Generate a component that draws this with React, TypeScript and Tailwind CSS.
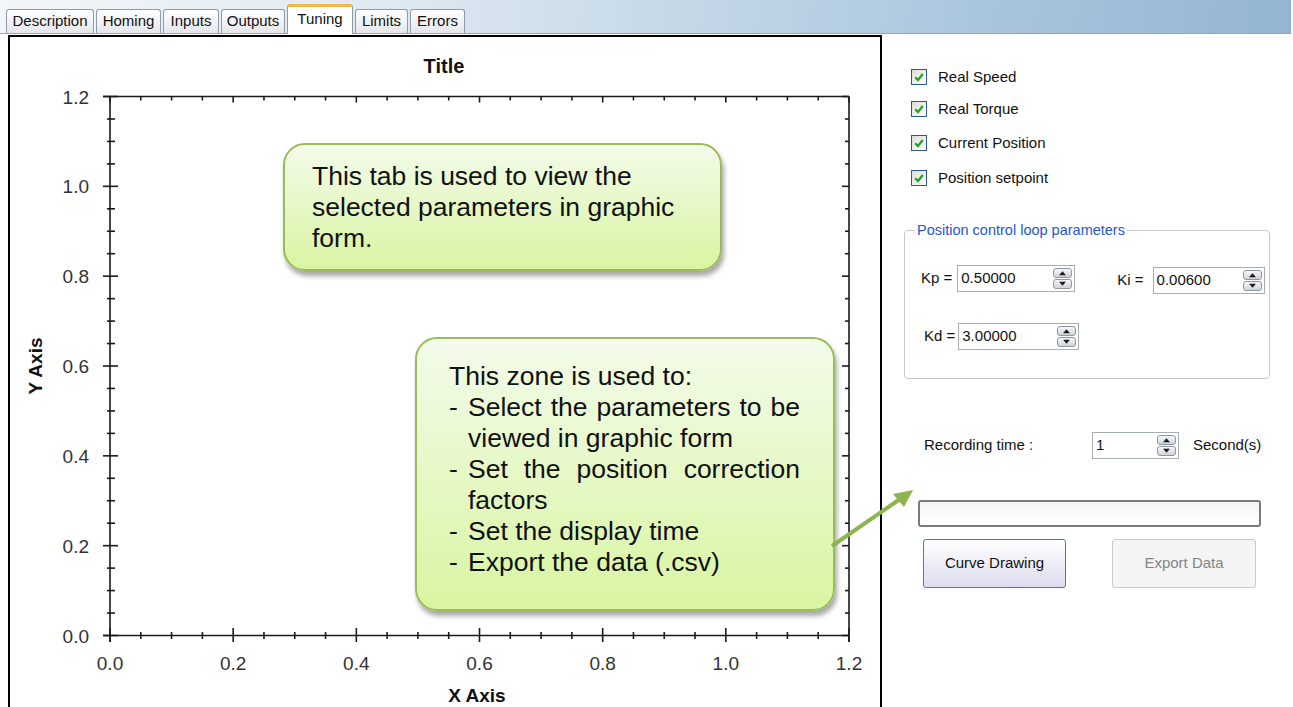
import type { ReactNode } from 'react'

const tabs = [
    { label: 'Description', w: 'w-[88px]' },
    { label: 'Homing', w: 'w-[65px]' },
    { label: 'Inputs', w: 'w-[56px]' },
    { label: 'Outputs', w: 'w-[64px]' },
    { label: 'Tuning', w: 'w-[66px]', active: true },
    { label: 'Limits', w: 'w-[53px]' },
    { label: 'Errors', w: 'w-[55px]' },
]

// plot area in page coordinates
const X0 = 110
const X1 = 849
const YB = 635.5
const YT = 96.5
const sx = (v: number) => X0 + (v / 1.2) * (X1 - X0)
const sy = (v: number) => YB - (v / 1.2) * (YB - YT)
const steps = Array.from({ length: 25 }, (_, i) => i * 0.05)
const labels = [0, 0.2, 0.4, 0.6, 0.8, 1.0, 1.2]

const Chart = () => (
    <svg width={870} height={670} viewBox="10 37 870 670" className="block">
        <text x={444} y={73} textAnchor="middle" fontSize={20} fontWeight={700} fill="#111">
            Title
        </text>

        <g stroke="#1a1a1a" strokeWidth={1.6}>
            <line x1={103} y1={YT} x2={X1} y2={YT} />
            <line x1={103} y1={YB} x2={X1} y2={YB} />
            <line x1={X0} y1={YT} x2={X0} y2={642} />
            <line x1={X1} y1={YT} x2={X1} y2={642} />

            {steps.map((v, i) => {
                const major = i % 4 === 0
                const x = sx(v)
                const y = sy(v)
                return (
                    <g key={i}>
                        <line x1={x} y1={major ? 628 : 632} x2={x} y2={major ? 642 : 639} />
                        <line x1={x} y1={YT} x2={x} y2={major ? YT + 6 : YT + 4} />
                        <line x1={major ? 103 : 107} y1={y} x2={major ? 118 : 115} y2={y} />
                        <line x1={major ? 842 : 845} y1={y} x2={X1} y2={y} />
                    </g>
                )
            })}
        </g>

        <g fontSize={19} fill="#333">
            {labels.map((v) => (
                <text key={`y${v}`} x={89} y={sy(v) + 7} textAnchor="end">
                    {v.toFixed(1)}
                </text>
            ))}
            {labels.map((v) => (
                <text key={`x${v}`} x={sx(v)} y={670} textAnchor="middle">
                    {v.toFixed(1)}
                </text>
            ))}
        </g>

        <text x={477} y={702} textAnchor="middle" fontSize={19} fontWeight={700} fill="#111">
            X Axis
        </text>
        <text
            x={42}
            y={366}
            textAnchor="middle"
            fontSize={19}
            fontWeight={700}
            fill="#111"
            transform="rotate(-90 42 366)"
        >
            Y Axis
        </text>
    </svg>
)

const CheckBox = ({ label, className }: { label: string; className: string }) => (
    <div className={`flex h-[16px] items-center ${className}`}>
        <div className="h-[16px] w-[16px] border border-[#2a5c8a] bg-[linear-gradient(135deg,#dcdcd6,#ffffff)]">
            <svg viewBox="0 0 14 14" className="h-[14px] w-[14px]">
                <path d="M3.2 7.2 L6 10 L10.8 4" fill="none" stroke="#21a121" strokeWidth={2.2} />
            </svg>
        </div>
        <span className="ml-[11px] text-[15px] text-[#111]">{label}</span>
    </div>
)

const Spinner = () => (
    <div className="flex h-[21px] w-[19px] flex-col gap-[1px]">
        {['M1 6 L5 1.5 L9 6 Z', 'M1 1 L5 5.5 L9 1 Z'].map((d) => (
            <div
                key={d}
                className="flex h-[10px] items-center justify-center rounded-[3px] border border-[#8e979f] bg-[linear-gradient(#f6f7f9,#cfd4da)]"
            >
                <svg viewBox="0 0 10 7" className="h-[6px] w-[9px]">
                    <path d={d} fill="#1a1a1a" />
                </svg>
            </div>
        ))}
    </div>
)

const SpinInput = ({ value, className }: { value: string; className: string }) => (
    <div className={`flex h-[27px] items-center border border-[#a7adb5] bg-white pl-[3px] pr-[2px] ${className}`}>
        <span className="flex-1 text-[15px] text-[#111]">{value}</span>
        <Spinner />
    </div>
)

const Callout = ({ className, children }: { className: string; children: ReactNode }) => (
    <div
        className={`absolute rounded-[22px] border-2 border-[#9bbb59] bg-[linear-gradient(#f3fbea,#d8f5a2)] text-[26.5px] leading-[31px] text-[#111] shadow-[2px_5px_5px_rgba(0,0,0,0.35)] ${className}`}
    >
        {children}
    </div>
)

const Item = ({ children }: { children: ReactNode }) => (
    <div className="flex">
        <span className="w-[19px] shrink-0">-</span>
        <span className="flex-1 text-justify">{children}</span>
    </div>
)

export default function App() {
    return (
        <div className="relative h-[707px] w-[1293px] overflow-hidden bg-white font-['Liberation_Sans',Arial,sans-serif]">
            <div className="flex h-[34px] w-[1291px] items-end gap-[2px] border-b border-[#9aa7b2] bg-[linear-gradient(100deg,#f2f6f9_0%,#dfe9f1_30%,#aac6de_75%,#93b4d2_100%)] pl-[6px]">
                {tabs.map((t) =>
                    t.active ? (
                        <div
                            key={t.label}
                            className={`${t.w} -mb-[1px] flex h-[30px] items-start justify-center rounded-t-[3px] border-x border-t-[3px] border-x-[#8f9ba7] border-t-[#f6b83c] bg-white pt-[1px] text-[15px] text-[#111]`}
                        >
                            {t.label}
                        </div>
                    ) : (
                        <div
                            key={t.label}
                            className={`${t.w} flex h-[24px] items-center justify-center rounded-t-[3px] border border-b-0 border-[#8f9ba7] bg-[linear-gradient(#ffffff,#e4e6ec)] text-[15px] text-[#111]`}
                        >
                            {t.label}
                        </div>
                    )
                )}
            </div>

            <div className="mt-[1px] flex">
                <div className="ml-[8px] h-[672px] w-[874px] border-2 border-b-0 border-black">
                    <Chart />
                </div>

                <div className="flex flex-1 flex-col">
                    <div className="flex flex-col pl-[29px]">
                        <CheckBox label="Real Speed" className="mt-[34px]" />
                        <CheckBox label="Real Torque" className="mt-[16px]" />
                        <CheckBox label="Current Position" className="mt-[18px]" />
                        <CheckBox label="Position setpoint" className="mt-[19px]" />
                    </div>

                    <fieldset className="ml-[22px] mt-[36px] w-[366px] rounded-[4px] border border-[#c3c8cd] pb-[28px]">
                        <legend className="ml-[10px] px-[2px] text-[14.5px] leading-[17px] text-[#2455d6]">
                            Position control loop parameters
                        </legend>
                        <div className="mt-[26px] flex items-start pl-[16px]">
                            <div className="flex items-center">
                                <span className="text-[15px] text-[#111]">Kp =</span>
                                <SpinInput value="0.50000" className="ml-[5px] w-[118px]" />
                            </div>
                            <div className="ml-[42px] mt-[2px] flex items-center">
                                <span className="text-[15px] text-[#111]">Ki =</span>
                                <SpinInput value="0.00600" className="ml-[9px] w-[112px]" />
                            </div>
                        </div>
                        <div className="mt-[29px] flex items-center pl-[19px]">
                            <span className="text-[15px] text-[#111]">Kd =</span>
                            <SpinInput value="3.00000" className="ml-[3px] w-[121px]" />
                        </div>
                    </fieldset>

                    <div className="mt-[53px] flex items-center pl-[42px] text-[15px] text-[#111]">
                        <span className="w-[168px]">Recording time :</span>
                        <SpinInput value="1" className="w-[87px]" />
                        <span className="ml-[14px]">Second(s)</span>
                    </div>

                    <div className="ml-[36px] mt-[41px] h-[27px] w-[343px] rounded-[3px] border-2 border-[#7a7a7a] bg-[linear-gradient(#f4f4f4,#ffffff)]" />

                    <div className="mt-[12px] flex pl-[41px]">
                        <button className="h-[49px] w-[143px] rounded-[3px] border border-[#3c7fb1] bg-[linear-gradient(#ffffff,#dcdcee)] text-[15px] text-[#111]">
                            Curve Drawing
                        </button>
                        <button className="ml-[46px] h-[49px] w-[144px] rounded-[3px] border border-[#c9cacb] bg-[#f4f4f4] text-[15px] text-[#848484]">
                            Export Data
                        </button>
                    </div>
                </div>
            </div>

            <Callout className="left-[283px] top-[143px] h-[128px] w-[439px] pl-[27px] pt-[16px]">
                <div className="w-[375px]">This tab is used to view the selected parameters in graphic form.</div>
            </Callout>

            <Callout className="left-[415px] top-[337px] h-[274px] w-[420px] pl-[32px] pt-[22px]">
                <div className="w-[351px]">
                    <div>This zone is used to:</div>
                    <Item>Select the parameters to be viewed in graphic form</Item>
                    <Item>Set the position correction factors</Item>
                    <Item>Set the display time</Item>
                    <Item>Export the data (.csv)</Item>
                </div>
            </Callout>

            <svg className="absolute left-[826px] top-[482px] h-[70px] w-[92px]" viewBox="826 482 92 70">
                <line x1={832} y1={546} x2={903} y2={497} stroke="#8db54f" strokeWidth={4} />
                <path d="M913 490 L893 494 L904 507 Z" fill="#8db54f" />
            </svg>
        </div>
    )
}
